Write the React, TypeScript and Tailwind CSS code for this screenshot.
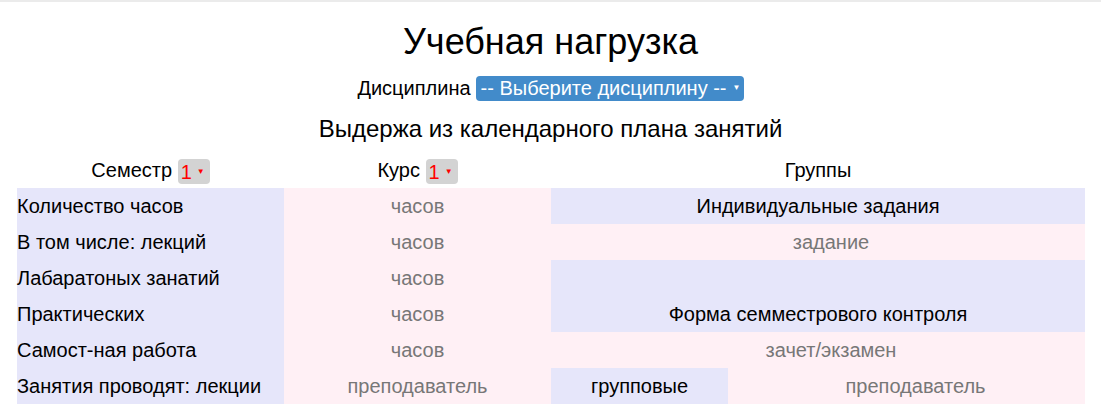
import React from "react";

const lav = "bg-[#e6e6fa]";
const pink = "bg-[#fff0f5]";

function SmallSelect() {
  return (
    <span className="inline-flex items-center h-[25px] w-[32px] rounded-[4px] bg-[#d3d3d3] pl-[3px] align-middle">
      <span className="text-[#ff0000] text-[20px] leading-none">1</span>
      <span className="text-[#ff0000] text-[8px] ml-[5px] leading-none">▼</span>
    </span>
  );
}

const rows: { label: string; mid: string }[] = [
  { label: "Количество часов", mid: "часов" },
  { label: "В том числе: лекций", mid: "часов" },
  { label: "Лабаратоных занатий", mid: "часов" },
  { label: "Практических", mid: "часов" },
  { label: "Самост-ная работа", mid: "часов" },
  { label: "Занятия проводят: лекции", mid: "преподаватель" },
];

export default function App() {
  return (
    <div className="w-[1101px] h-[415px] bg-white border-t-2 border-[#ebebeb] font-['Liberation_Sans',Arial,sans-serif] text-black overflow-hidden">
      <h1 className="text-center text-[36px] leading-[40px] mt-[20px]">Учебная нагрузка</h1>
      <div className="flex justify-center items-center mt-[13px] h-[26px] text-[20px]">
        <span>Дисциплина</span>
        <span className="ml-[5px] inline-flex items-center h-[25px] w-[268px] rounded-[4px] bg-[#428bca] text-white pl-[5px]">
          <span className="text-[20px] leading-none">-- Выберите дисциплину --</span>
          <span className="text-[8px] ml-[6px] leading-none">▼</span>
        </span>
      </div>
      <h2 className="text-center text-[24px] leading-[28px] mt-[14px]">Выдержа из календарного плана занятий</h2>
      <div className="mx-[17px] mt-[9px] w-[1068px] text-[20px]">
        <div className="grid grid-cols-[267px_267px_534px] h-[36px] items-center text-center">
          <div>
            Семестр <SmallSelect />
          </div>
          <div>
            Курс <SmallSelect />
          </div>
          <div>Группы</div>
        </div>
        <div className="grid grid-cols-[267px_267px_534px]">
          <div className={lav}>
            {rows.map((r) => (
              <div key={r.label} className="h-[36px] flex items-center">
                {r.label}
              </div>
            ))}
          </div>
          <div className={pink}>
            {rows.map((r, i) => (
              <div key={i} className="h-[36px] flex items-center justify-center text-[#777]">
                {r.mid}
              </div>
            ))}
          </div>
          <div className="flex flex-col">
            <div className={`${lav} h-[36px] flex items-center justify-center`}>Индивидуальные задания</div>
            <div className={`${pink} h-[36px] flex items-center justify-center pl-[26px] text-[#777]`}>задание</div>
            <div className={`${lav} h-[36px]`}></div>
            <div className={`${lav} h-[36px] flex items-center justify-center`}>Форма семместрового контроля</div>
            <div className={`${pink} h-[36px] flex items-center justify-center pl-[26px] text-[#777]`}>зачет/экзамен</div>
            <div className="h-[36px] flex">
              <div className={`${lav} w-[177px] flex items-center justify-center`}>групповые</div>
              <div className={`${pink} flex-1 flex items-center justify-center pl-[18px] text-[#777]`}>преподаватель</div>
            </div>
          </div>
        </div>
      </div>
    </div>
  );
}
